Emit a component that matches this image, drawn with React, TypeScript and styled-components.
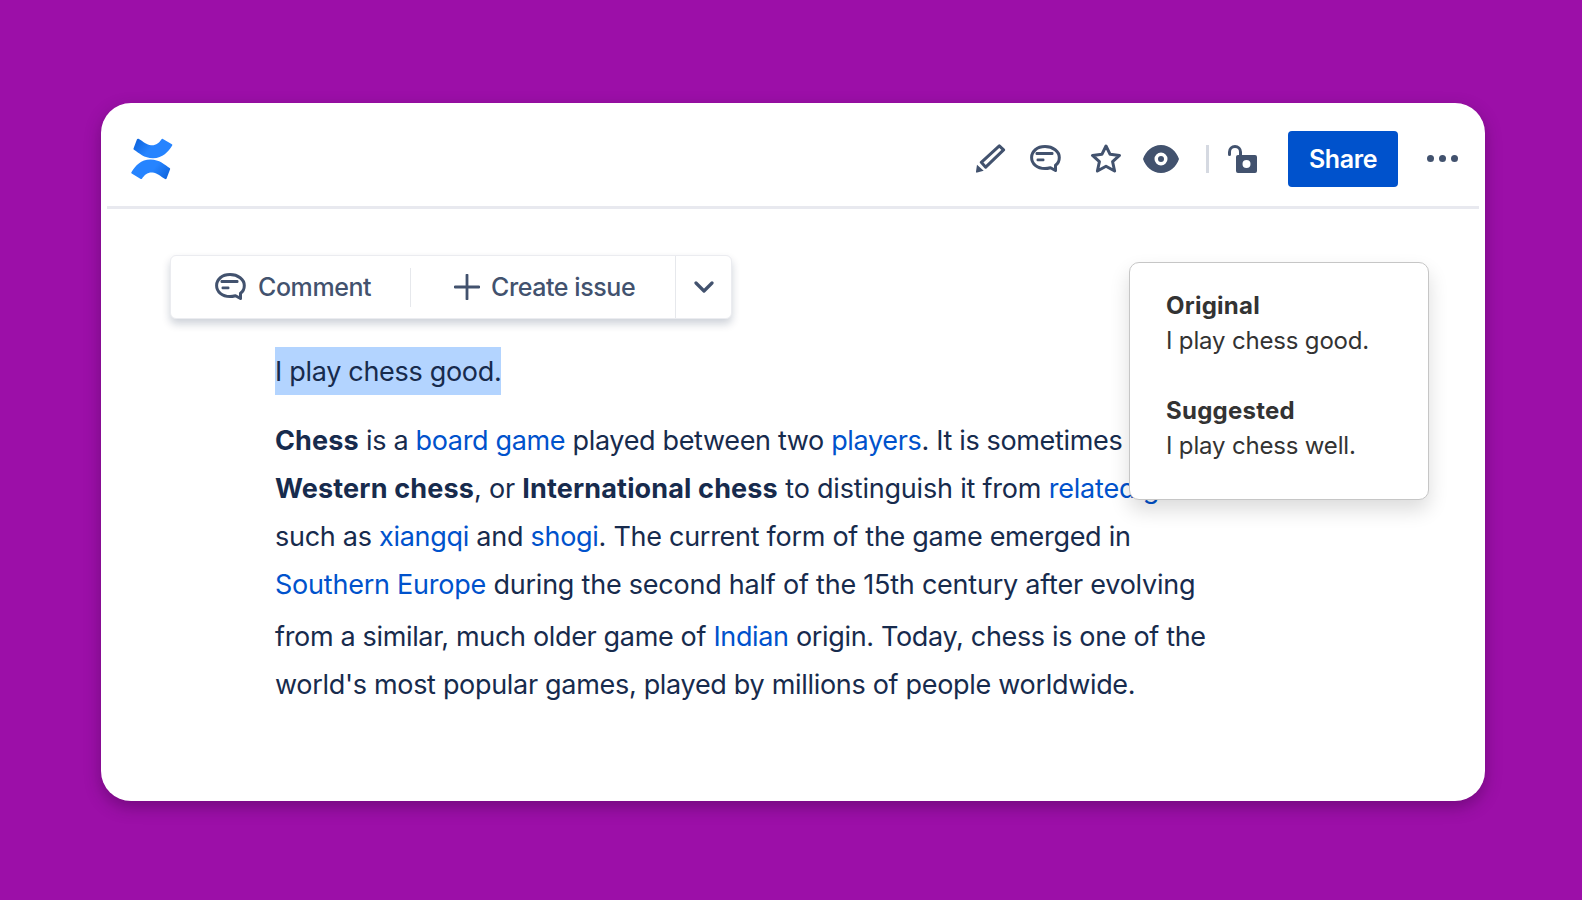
import styled, { createGlobalStyle } from "styled-components";

const GlobalStyle = createGlobalStyle`
  html, body {
    margin: 0;
    padding: 0;
    background: #9c0fa8;
  }
  body {
    font-family: Inter, "Liberation Sans", sans-serif;
    -webkit-font-smoothing: antialiased;
  }
`;

const Page = styled.div`
  width: 1582px;
  height: 900px;
  box-sizing: border-box;
  padding: 103px 97px 99px 101px;
  overflow: hidden;
`;

const Card = styled.main`
  position: relative;
  height: 698px;
  background: #fff;
  border-radius: 30px;
  padding: 0 6px;
  box-shadow: 0 6px 16px rgba(40, 0, 50, 0.35);
`;

const Header = styled.header`
  display: flex;
  align-items: center;
  height: 106px;
  box-sizing: border-box;
  padding: 8px 21px 0 24px;
  border-bottom: 3px solid #e8e9ef;
`;

const HeaderActions = styled.div`
  display: flex;
  align-items: center;
  margin-left: auto;
`;

const IconSlot = styled.span<{ $w: number; $ml?: number }>`
  display: flex;
  justify-content: center;
  width: ${(p) => p.$w}px;
  margin-left: ${(p) => p.$ml ?? 0}px;
  color: #42526e;
`;

const VDivider = styled.span`
  width: 3px;
  height: 28px;
  margin-left: 27px;
  background: #d5d9e1;
`;

const ShareButton = styled.button`
  width: 110px;
  height: 56px;
  margin-left: 31px;
  border: 0;
  border-radius: 4px;
  background: #0052cc;
  color: #fff;
  font: 600 25px Inter, sans-serif;
  letter-spacing: -0.4px;
`;

const Dots = styled.span`
  display: flex;
  gap: 5px;
  margin-left: 29px;
  i {
    width: 7px;
    height: 7px;
    border-radius: 50%;
    background: #42526e;
  }
`;

const Content = styled.div`
  padding: 46px 0 0 63px;
`;

const Toolbar = styled.div`
  display: flex;
  align-items: center;
  width: 562px;
  height: 64px;
  box-sizing: border-box;
  border-radius: 6px;
  border: 1px solid #ebecf0;
  background: #fff;
  color: #42526e;
  box-shadow: 0 5px 9px rgba(9, 30, 66, 0.2);
`;

const ToolButton = styled.div<{ $w: number; $pad: number }>`
  display: flex;
  align-items: center;
  gap: 11px;
  width: ${(p) => p.$w}px;
  box-sizing: border-box;
  padding-left: ${(p) => p.$pad}px;
  font-size: 25px;
  font-weight: 500;
  letter-spacing: -0.42px;
`;

const ToolSep = styled.span<{ $full?: boolean }>`
  width: 1px;
  height: ${(p) => (p.$full ? "100%" : "39px")};
  background: #e6e8ec;
`;

const Article = styled.article`
  padding: 28px 0 0 105px;
  color: #172b4d;
  font-size: 27px;
  line-height: 48px;
  letter-spacing: -0.31px;
  white-space: nowrap;
`;

const Highlighted = styled.p`
  margin: 0 0 21px;
  span {
    display: inline-block;
    height: 48px;
    line-height: 50px;
    background: #b3d4ff;
  }
`;

const Paragraph = styled.p`
  margin: 0 0 4px;
  strong {
    font-weight: 700;
    letter-spacing: 0.15px;
  }
  a {
    color: #0052cc;
    text-decoration: none;
  }
`;

const Line = styled.span<{ $track: number }>`
  display: block;
  letter-spacing: ${(p) => p.$track}px;
`;

const Suggestion = styled.aside`
  position: absolute;
  left: 1028px;
  top: 159px;
  width: 300px;
  height: 238px;
  box-sizing: border-box;
  padding: 25px 36px;
  background: #fff;
  border: 1px solid #c6c6c6;
  border-radius: 10px;
  color: #333;
  font-size: 24px;
  line-height: 35px;
  letter-spacing: -0.17px;
  box-shadow: 0 10px 20px rgba(0, 0, 0, 0.14);
`;

const SuggestionBlock = styled.div`
  margin-bottom: 35px;
  b {
    display: block;
    font-weight: 700;
    letter-spacing: 0.25px;
  }
`;

const CommentIcon = ({ size }: { size: number }) => (
  <svg width={size} height={size * 0.875} viewBox="0 0 32 28" fill="none">
    <path
      d="M15 1.600C7 1.600 1.600 6.300 1.600 12.500S7 23.500 15 23.500c2 0 3.500-.3 5.500-.8l5 2.800 0-5.200c2.700-1.800 3.800-4.800 3.800-7.800C29.300 6.300 23 1.600 15 1.600z"
      stroke="currentColor"
      strokeWidth="3"
      strokeLinejoin="round"
    />
    <rect x="5.500" y="7" width="18" height="3" rx="1.200" fill="currentColor" />
    <rect x="6.500" y="13.500" width="8" height="2.800" rx="1.200" fill="currentColor" />
  </svg>
);

const logoBand =
  "M7.500 .8C12 3.500 16 7 20 7.300c5 .4 8-2.300 10.500-6 .4-.6.900-.7 1.400-.4l9 5.400c.5.3.6.8.3 1.300C37 14 32 20.300 22 20.300 13 20.300 8 15 3 11.800c-.5-.3-.7-.8-.5-1.300L6 1.300c.3-.6.900-.8 1.500-.5z";

const App = () => (
  <>
    <GlobalStyle />
    <Page>
      <Card>
        <Header>
          <svg width="42" height="42" viewBox="0 0 42 42">
            <defs>
              <linearGradient id="logoBand" x1="0" y1="0" x2="1" y2="0.4">
                <stop offset="0" stopColor="#0a5fd8" />
                <stop offset="0.55" stopColor="#2684ff" />
                <stop offset="1" stopColor="#2684ff" />
              </linearGradient>
            </defs>
            <path d={logoBand} fill="url(#logoBand)" />
            <path d={logoBand} fill="url(#logoBand)" transform="rotate(180 20.800 20.900)" />
          </svg>
          <HeaderActions>
            <IconSlot $w={30}>
              <svg width="30" height="29" viewBox="0 0 30 29" fill="currentColor">
                <path
                  d="M5.300 18.300 23.300 1.800l4.300 4.100L9.700 23.200z"
                  fill="none"
                  stroke="currentColor"
                  strokeWidth="3"
                  strokeLinejoin="round"
                />
                <path d="M1 20.700l6.700 6-6.500 1.900c-.8.200-1.400-.4-1.200-1.200L1 20.700z" />
              </svg>
            </IconSlot>
            <IconSlot $w={32} $ml={24}>
              <CommentIcon size={32} />
            </IconSlot>
            <IconSlot $w={32} $ml={28}>
              <svg width="32" height="30" viewBox="0 0 32 30" fill="none">
                <path
                  d="M16 2l4.100 8.300 9.400 1.100-6.900 6.300 2 9.300-8.600-4.800-8.600 4.800 2-9.300-6.900-6.300 9.400-1.100L16 2z"
                  stroke="currentColor"
                  strokeWidth="3"
                  strokeLinejoin="round"
                />
              </svg>
            </IconSlot>
            <IconSlot $w={36} $ml={21}>
              <svg width="36" height="28" viewBox="0 0 36 28" fill="currentColor">
                <path
                  fillRule="evenodd"
                  d="M18 0c9 0 15.500 6.500 18 14-2.500 7.500-9 14-18 14S2.500 21.500 0 14C2.500 6.500 9 0 18 0zm0 7.500a6.500 6.500 0 1 0 0 13 6.500 6.500 0 0 0 0-13zm0 3.500a3 3 0 1 1 0 6 3 3 0 0 1 0-6z"
                />
              </svg>
            </IconSlot>
            <VDivider />
            <IconSlot $w={29} $ml={19}>
              <svg width="29" height="28" viewBox="0 0 29 28" fill="none">
                <path
                  d="M1.500 9.500V7a5.500 5.500 0 0 1 11 0v5"
                  stroke="currentColor"
                  strokeWidth="3"
                  strokeLinecap="round"
                />
                <path
                  fillRule="evenodd"
                  fill="currentColor"
                  d="M10 10h17a2 2 0 0 1 2 2v14a2 2 0 0 1-2 2H10a2 2 0 0 1-2-2V12a2 2 0 0 1 2-2zm8.500 5a4 4 0 1 0 0 8 4 4 0 0 0 0-8z"
                />
              </svg>
            </IconSlot>
            <ShareButton>Share</ShareButton>
            <Dots>
              <i />
              <i />
              <i />
            </Dots>
          </HeaderActions>
        </Header>
        <Content>
          <Toolbar>
            <ToolButton $w={239} $pad={44}>
              <CommentIcon size={32} />
              Comment
            </ToolButton>
            <ToolSep />
            <ToolButton $w={264} $pad={43}>
              <svg width="26" height="26" viewBox="0 0 26 26" fill="none">
                <path d="M13 1v24M1 13h24" stroke="currentColor" strokeWidth="2.800" strokeLinecap="round" />
              </svg>
              Create issue
            </ToolButton>
            <ToolSep $full />
            <ToolButton $w={55} $pad={18}>
              <svg width="20" height="12" viewBox="0 0 20 12" fill="none">
                <path d="M2 2l8 8 8-8" stroke="currentColor" strokeWidth="3.200" strokeLinecap="round" strokeLinejoin="round" />
              </svg>
            </ToolButton>
          </Toolbar>
          <Article>
            <Highlighted>
              <span>I play chess good.</span>
            </Highlighted>
            <Paragraph>
              <Line $track={-0.34}>
                <strong>Chess</strong> is a <a>board game</a> played between two <a>players</a>. It is sometimes called
              </Line>
              <Line $track={-0.2}>
                <strong>Western chess</strong>, or <strong>International chess</strong> to distinguish it from <a>related games</a>
              </Line>
              <Line $track={-0.28}>
                such as <a>xiangqi</a> and <a>shogi</a>. The current form of the game emerged in
              </Line>
              <Line $track={-0.23}>
                <a>Southern Europe</a> during the second half of the 15th century after evolving
              </Line>
            </Paragraph>
            <Paragraph>
              <Line $track={-0.34}>
                from a similar, much older game of <a>Indian</a> origin. Today, chess is one of the
              </Line>
              <Line $track={-0.31}>
                world's most popular games, played by millions of people worldwide.
              </Line>
            </Paragraph>
          </Article>
        </Content>
        <Suggestion>
          <SuggestionBlock>
            <b>Original</b>I play chess good.
          </SuggestionBlock>
          <SuggestionBlock>
            <b>Suggested</b>I play chess well.
          </SuggestionBlock>
        </Suggestion>
      </Card>
    </Page>
  </>
);

export default App;
